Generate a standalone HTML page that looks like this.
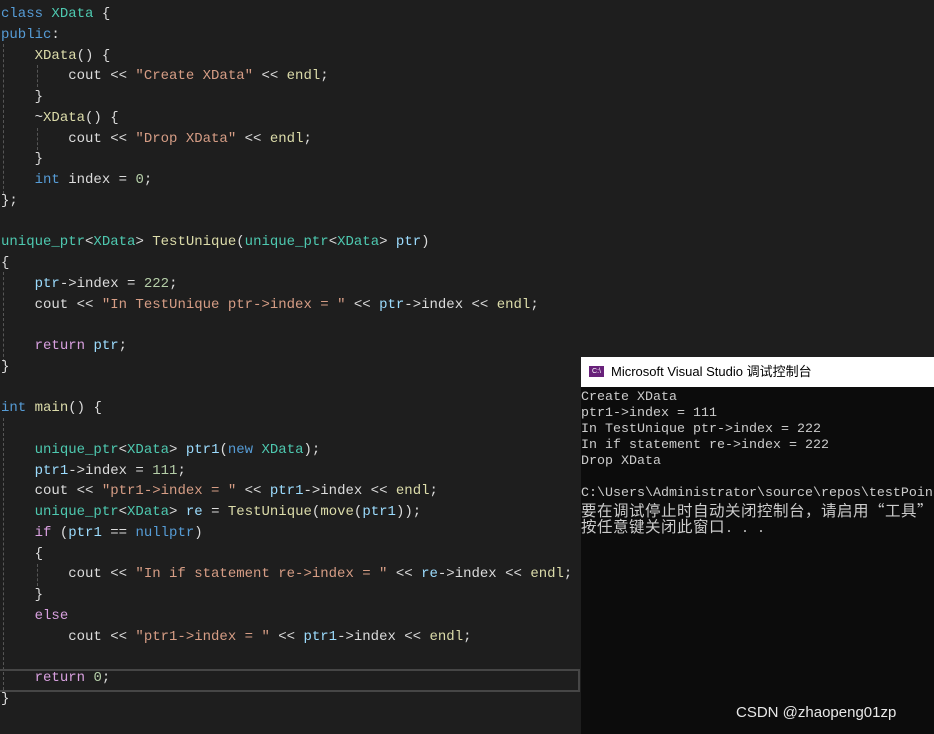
<!DOCTYPE html><html><head><meta charset="utf-8"><style>
body{margin:0;width:934px;height:734px;background:#1e1e1e;overflow:hidden;position:relative}
#code{margin:0;position:absolute;left:1px;top:4px;font:14px/20.75px "Liberation Mono","Noto Sans CJK SC",monospace;color:#dcdcdc}
.k{color:#569cd6}.t{color:#4ec9b0}.s{color:#d69d85}.f{color:#dcdcaa}.v{color:#9cdcfe}.c{color:#d8a0df}.n{color:#b5cea8}
.cur{position:absolute;left:0;top:669px;width:578px;height:19px;border:2px solid #464646;border-left:none}
.g{position:absolute;width:0;border-left:1px dashed #555}
#con{position:absolute;left:581px;top:357px;width:353px;height:377px;background:#0c0c0c;overflow:hidden}
#tb{height:30px;background:#fff;font:13px/30px "Liberation Sans","Noto Sans CJK SC",sans-serif;color:#000;padding-left:30px;position:relative}
#ic{position:absolute;left:8px;top:9px;width:15px;height:11px;background:#68217a;color:#fff;font:7px/11px "Liberation Sans",sans-serif;text-align:center}
#ct{margin:0;padding-top:3px;font:13.33px/16px "Liberation Mono","Noto Sans CJK SC",monospace;color:#cccccc;white-space:pre}
.ln{display:block;height:16px;line-height:16px;overflow:visible}
.cj{font-family:"Noto Sans CJK SC",monospace;font-size:15.5px;letter-spacing:0.5px;line-height:16px}
#wm{position:absolute;left:736px;top:704px;font:15px "Liberation Sans",sans-serif;color:#e8e8e8}
</style></head><body>
<div class="g" style="left:3px;top:44px;height:150px"></div>
<div class="g" style="left:37px;top:65px;height:22px"></div>
<div class="g" style="left:37px;top:128px;height:22px"></div>
<div class="g" style="left:3px;top:272px;height:90px"></div>
<div class="g" style="left:3px;top:418px;height:272px"></div>
<div class="g" style="left:37px;top:564px;height:22px"></div>
<div class="cur"></div>
<pre id="code"><span class="k">class</span> <span class="t">XData</span> {
<span class="k">public</span>:
    <span class="f">XData</span>() {
        cout &lt;&lt; <span class="s">"Create XData"</span> &lt;&lt; <span class="f">endl</span>;
    }
    ~<span class="f">XData</span>() {
        cout &lt;&lt; <span class="s">"Drop XData"</span> &lt;&lt; <span class="f">endl</span>;
    }
    <span class="k">int</span> index = <span class="n">0</span>;
};

<span class="t">unique_ptr</span>&lt;<span class="t">XData</span>&gt; <span class="f">TestUnique</span>(<span class="t">unique_ptr</span>&lt;<span class="t">XData</span>&gt; <span class="v">ptr</span>)
{
    <span class="v">ptr</span>-&gt;index = <span class="n">222</span>;
    cout &lt;&lt; <span class="s">"In TestUnique ptr-&gt;index = "</span> &lt;&lt; <span class="v">ptr</span>-&gt;index &lt;&lt; <span class="f">endl</span>;

    <span class="c">return</span> <span class="v">ptr</span>;
}

<span class="k">int</span> <span class="f">main</span>() {

    <span class="t">unique_ptr</span>&lt;<span class="t">XData</span>&gt; <span class="v">ptr1</span>(<span class="k">new</span> <span class="t">XData</span>);
    <span class="v">ptr1</span>-&gt;index = <span class="n">111</span>;
    cout &lt;&lt; <span class="s">"ptr1-&gt;index = "</span> &lt;&lt; <span class="v">ptr1</span>-&gt;index &lt;&lt; <span class="f">endl</span>;
    <span class="t">unique_ptr</span>&lt;<span class="t">XData</span>&gt; <span class="v">re</span> = <span class="f">TestUnique</span>(<span class="f">move</span>(<span class="v">ptr1</span>));
    <span class="c">if</span> (<span class="v">ptr1</span> == <span class="k">nullptr</span>)
    {
        cout &lt;&lt; <span class="s">"In if statement re-&gt;index = "</span> &lt;&lt; <span class="v">re</span>-&gt;index &lt;&lt; <span class="f">endl</span>;
    }
    <span class="c">else</span>
        cout &lt;&lt; <span class="s">"ptr1-&gt;index = "</span> &lt;&lt; <span class="v">ptr1</span>-&gt;index &lt;&lt; <span class="f">endl</span>;

    <span class="c">return</span> <span class="n">0</span>;
}</pre>
<div id="con"><div id="tb"><div id="ic">C:\</div>Microsoft Visual Studio 调试控制台</div>
<div id="ct"><span class="ln">Create XData</span><span class="ln">ptr1-&gt;index = 111</span><span class="ln">In TestUnique ptr-&gt;index = 222</span><span class="ln">In if statement re-&gt;index = 222</span><span class="ln">Drop XData</span><span class="ln"> </span><span class="ln">C:\Users\Administrator\source\repos\testPoin</span><span class="ln cj">要在调试停止时自动关闭控制台，请启用“工具”</span><span class="ln"><span class="cj">按任意键关闭此窗口</span>. . .</span></div></div>
<div id="wm">CSDN @zhaopeng01zp</div>
</body></html>
